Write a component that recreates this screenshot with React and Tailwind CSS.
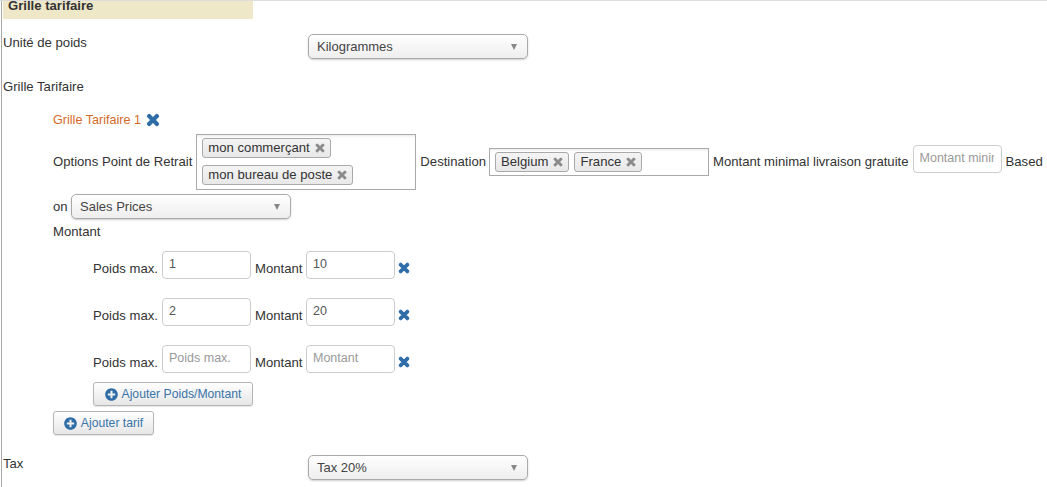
import { FaTimes, FaPlusCircle } from "react-icons/fa";

function FakeSelect({ label }) {
  return (
    <div className="w-[220px] h-[25px] flex items-center justify-between pl-[8px] pr-[10px] border border-[#aaaaaa] rounded-[5px] bg-gradient-to-b from-white to-[#eeeeee] shadow-[0_1px_2px_rgba(0,0,0,0.2)] text-[#444444] text-[13px]">
      <span>{label}</span>
      <span className="w-0 h-0 border-x-[3.5px] border-x-transparent border-t-[6px] border-t-[#888888]"></span>
    </div>
  );
}

function Chip({ label }) {
  return (
    <span className="h-[20px] flex items-center gap-[4px] pl-[5px] pr-[4px] border border-[#aaaaaa] rounded-[3px] bg-gradient-to-b from-[#f4f4f4] to-[#e8e8e8] text-[#333333]">
      {label}
      <FaTimes className="text-[#888888] text-[12px] stroke-[#888888] stroke-[30px]" />
    </span>
  );
}

function TextBox({ value, placeholder }) {
  return (
    <input
      readOnly
      value={value}
      placeholder={placeholder}
      className="w-[89px] h-[28px] pl-[6px] pr-[7px] pb-[2px] border border-[#cccccc] rounded-[4px] bg-white text-[#555555] text-[12.5px] placeholder:text-[#999999] outline-none"
    />
  );
}

function WeightRow({ weight, amount }) {
  return (
    <div className="flex items-start h-[28px]">
      <span className="w-[69px] leading-[36px]">Poids max.</span>
      <TextBox value={weight} placeholder="Poids max." />
      <span className="w-[55px] pl-[4px] leading-[36px] h-[28px] whitespace-nowrap">Montant</span>
      <TextBox value={amount} placeholder="Montant" />
      <FaTimes className="ml-[2px] mt-[10px] text-[#2f6da8] text-[14px] stroke-[#2f6da8] stroke-[40px]" />
    </div>
  );
}

function AddButton({ label, width }) {
  return (
    <button className={`${width} h-[24px] flex items-center justify-center gap-[4px] border border-[#b5b5b5] rounded-[3px] bg-gradient-to-b from-white to-[#e6e6e6] shadow-[0_1px_1px_rgba(0,0,0,0.1)] text-[#3a74a8] text-[12.2px]`}>
      <FaPlusCircle className="text-[#2f6da8] text-[13px]" />
      {label}
    </button>
  );
}

export default function App() {
  return (
    <div className="w-[1047px] h-[487px] overflow-hidden bg-white border-t border-[#dddddd] font-['Liberation_Sans',Arial,sans-serif] text-[13.13px] text-[#333333]">
      <div className="ml-px h-full border-l border-[#aaaaaa] pl-px">
        <div className="w-[250px] h-[18px] bg-[#efe8c8] pl-[5px] font-bold leading-[10px]">Grille tarifaire</div>

        <div className="mt-[15px] flex items-start h-[25px]">
          <span className="w-[305px] leading-[18px]">Unité de poids</span>
          <FakeSelect label="Kilogrammes" />
        </div>

        <div className="mt-[20px] leading-[16px]">Grille Tarifaire</div>

        <div className="pl-[50px]">
          <div className="mt-[17px] h-[16px] flex items-center gap-[4px] text-[#d56a28] text-[12.6px]">
            <span className="pt-[1px]">Grille Tarifaire 1</span>
            <FaTimes className="text-[#2f6da8] text-[16px] stroke-[#2f6da8] stroke-[40px]" />
          </div>

          <div className="mt-[6px] h-[56px] flex items-center whitespace-nowrap">
            <span>Options Point de Retrait</span>
            <div className="ml-[4px] w-[220px] h-[56px] flex flex-col items-start gap-[7px] pt-[3px] pl-[5px] border border-[#aaaaaa] shadow-[inset_0_3px_3px_-2px_rgba(0,0,0,0.1)]">
              <Chip label="mon commerçant" />
              <Chip label="mon bureau de poste" />
            </div>
            <span className="ml-[4px]">Destination</span>
            <div className="ml-[3px] w-[220px] h-[28px] flex items-center gap-[5px] pl-[5px] border border-[#aaaaaa] shadow-[inset_0_3px_3px_-2px_rgba(0,0,0,0.1)]">
              <Chip label="Belgium" />
              <Chip label="France" />
            </div>
            <span className="ml-[4px]">Montant minimal livraison gratuite</span>
            <div className="ml-[4px] -mt-[6px]">
              <TextBox value="" placeholder="Montant minimal livraison gratuite" />
            </div>
            <span className="ml-[4px]">Based</span>
          </div>

          <div className="mt-[4px] flex items-center gap-[3px]">
            <span className="w-[15px]">on</span>
            <FakeSelect label="Sales Prices" />
          </div>

          <div className="mt-[4px] leading-[18px]">Montant</div>

          <div className="mt-[10px] pl-[40px] flex flex-col gap-[19px]">
            <WeightRow weight="1" amount="10" />
            <WeightRow weight="2" amount="20" />
            <WeightRow weight="" amount="" />
          </div>

          <div className="mt-[9px] pl-[40px]">
            <AddButton label="Ajouter Poids/Montant" width="w-[160px]" />
          </div>
          <div className="mt-[5px]">
            <AddButton label="Ajouter tarif" width="w-[101px]" />
          </div>
        </div>

        <div className="mt-[20px] flex items-start h-[25px]">
          <span className="w-[305px] leading-[18px]">Tax</span>
          <FakeSelect label="Tax 20%" />
        </div>
      </div>
    </div>
  );
}
